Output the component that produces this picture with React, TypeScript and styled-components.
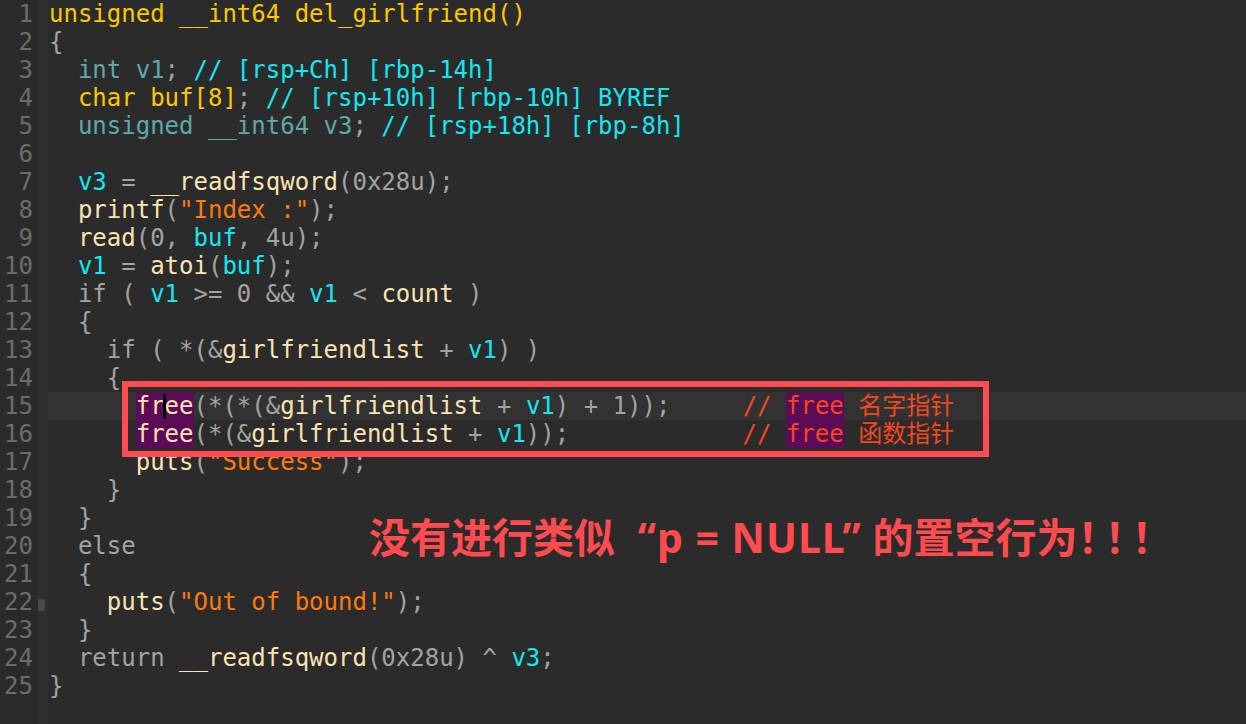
import React from "react";
import styled, { createGlobalStyle } from "styled-components";

const Global = createGlobalStyle`
  html, body { margin: 0; padding: 0; background: #2b2b2b; height: 100%; }
  #root { height: 100%; }
`;

type Kind = "p" | "y" | "t" | "c" | "v" | "f" | "s" | "r";
type Tok = [Kind, string, boolean?];

const colors: Record<Kind, string> = {
  p: "#a3a3a3",
  y: "#fcc800",
  t: "#5ea9a9",
  c: "#14e8f0",
  v: "#14e8f0",
  f: "#fbe3b4",
  s: "#ff7a0f",
  r: "#f4471f",
};

const lines: Tok[][] = [
  [["y", "unsigned __int64 del_girlfriend()"]],
  [["p", "{"]],
  [["p", "  "], ["t", "int v1"], ["p", "; "], ["c", "// [rsp+Ch] [rbp-14h]"]],
  [["p", "  "], ["y", "char buf[8]"], ["p", "; "], ["c", "// [rsp+10h] [rbp-10h] BYREF"]],
  [["p", "  "], ["t", "unsigned __int64 v3"], ["p", "; "], ["c", "// [rsp+18h] [rbp-8h]"]],
  [],
  [["p", "  "], ["v", "v3"], ["p", " = "], ["f", "__readfsqword"], ["p", "(0x28u);"]],
  [["p", "  "], ["f", "printf"], ["p", "("], ["s", "\"Index :\""], ["p", ");"]],
  [["p", "  "], ["f", "read"], ["p", "(0, "], ["v", "buf"], ["p", ", 4u);"]],
  [["p", "  "], ["v", "v1"], ["p", " = "], ["f", "atoi"], ["p", "("], ["v", "buf"], ["p", ");"]],
  [["p", "  if ( "], ["v", "v1"], ["p", " >= 0 && "], ["v", "v1"], ["p", " < "], ["f", "count"], ["p", " )"]],
  [["p", "  {"]],
  [["p", "    if ( *(&"], ["f", "girlfriendlist"], ["p", " + "], ["v", "v1"], ["p", ") )"]],
  [["p", "    {"]],
  [
    ["p", "      "], ["f", "fr", true], ["f", "ee", true], ["p", "(*(*(&"], ["f", "girlfriendlist"], ["p", " + "], ["v", "v1"],
    ["p", ") + 1));     "], ["r", "// "], ["r", "free", true], ["r", " 名字指针"],
  ],
  [
    ["p", "      "], ["f", "free", true], ["p", "(*(&"], ["f", "girlfriendlist"], ["p", " + "], ["v", "v1"],
    ["p", "));            "], ["r", "// "], ["r", "free", true], ["r", " 函数指针"],
  ],
  [["p", "      "], ["f", "puts"], ["p", "("], ["s", "\"Success\""], ["p", ");"]],
  [["p", "    }"]],
  [["p", "  }"]],
  [["p", "  else"]],
  [["p", "  {"]],
  [["p", "    "], ["f", "puts"], ["p", "("], ["s", "\"Out of bound!\""], ["p", ");"]],
  [["p", "  }"]],
  [["p", "  return "], ["f", "__readfsqword"], ["p", "(0x28u) ^ "], ["v", "v3"], ["p", ";"]],
  [["p", "}"]],
];

const CURRENT = 14;
const MARKER = 21;

const Editor = styled.div`
  position: relative;
  display: flex;
  min-height: 724px;
  background: #2b2b2b;
  font-family: "DejaVu Sans Mono", "Noto Sans CJK SC", monospace;
  font-size: 24px;
  overflow: hidden;
`;

const Gutter = styled.div`
  display: flex;
  flex-direction: column;
  width: 38px;
  background: #2a2a2a;
`;

const LineNo = styled.div`
  height: 28px;
  line-height: 28px;
  text-align: right;
  padding-right: 5px;
  color: #6c6c6c;
`;

const Strip = styled.div`
  display: flex;
  flex-direction: column;
  width: 10px;
  background: #2f2f2f;
`;

const StripCell = styled.div`
  height: 28px;
  display: flex;
  align-items: center;
`;

const Marker = styled.div`
  width: 7px;
  height: 12px;
  margin-top: 6px;
  border-radius: 0 3px 3px 0;
  background: #4a4a4a;
`;

const Code = styled.div`
  flex: 1;
  display: flex;
  flex-direction: column;
`;

const Line = styled.div<{ $current?: boolean }>`
  height: 28px;
  line-height: 28px;
  white-space: pre;
  padding-left: 1px;
  background: ${(p) => (p.$current ? "#323232" : "transparent")};
`;

const Tok = styled.span<{ $kind: Kind; $mark?: boolean }>`
  color: ${(p) => colors[p.$kind]};
  background: ${(p) => (p.$mark ? "#5c0b57" : "transparent")};
`;

const Caret = styled.span`
  display: inline-block;
  width: 3px;
  height: 25px;
  margin: 0 -1.5px;
  vertical-align: -5px;
  background: #000;
  position: relative;
`;

const Highlight = styled.div`
  position: absolute;
  left: 122px;
  top: 381px;
  width: 867px;
  height: 76px;
  box-sizing: border-box;
  border: 6px solid #fe4b4f;
  pointer-events: none;
`;

const Note = styled.div`
  position: absolute;
  left: 369px;
  top: 507px;
  font-family: "Noto Sans", "Noto Sans CJK SC", sans-serif;
  font-weight: 700;
  font-size: 41px;
  line-height: 56px;
  color: #fe4b4f;
  white-space: pre;
`;

const Quoted = styled.span`
  margin-left: 12px;
  letter-spacing: 1px;
`;

const Bangs = styled.span`
  font-family: "Noto Sans CJK SC", sans-serif;
  letter-spacing: -14px;
`;

export default function App() {
  return (
    <>
      <Global />
      <Editor>
        <Gutter>
          {lines.map((_, i) => (
            <LineNo key={i}>{i + 1}</LineNo>
          ))}
        </Gutter>
        <Strip>
          {lines.map((_, i) => (
            <StripCell key={i}>{i === MARKER ? <Marker /> : null}</StripCell>
          ))}
        </Strip>
        <Code>
          {lines.map((toks, i) => (
            <Line key={i} $current={i === CURRENT}>
              {toks.map(([k, text, mark], j) => (
                <React.Fragment key={j}>
                  <Tok $kind={k} $mark={mark}>
                    {text}
                  </Tok>
                  {i === CURRENT && j === 1 ? <Caret /> : null}
                </React.Fragment>
              ))}
              {toks.length === 0 ? " " : null}
            </Line>
          ))}
        </Code>
        <Highlight />
        <Note>
          没有进行类似 <Quoted>“p = NULL”</Quoted> 的置空行为<Bangs>！！！</Bangs>
        </Note>
      </Editor>
    </>
  );
}
